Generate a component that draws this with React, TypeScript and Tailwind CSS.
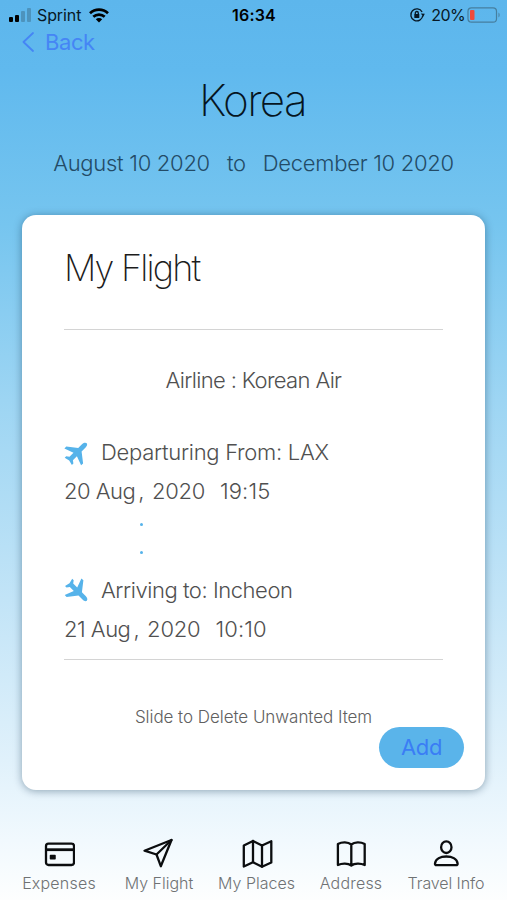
import React from 'react';

const Plane: React.FC<{ className?: string }> = ({ className }) => (
  <svg viewBox="0 0 24 24" className={className} fill="currentColor">
    <path d="M22.700 1.200c-1-1-3-.6-4.500.9L14.200 6.100 2.300 4.600.4 6.600l9.100 4.200-4 4-3.300-.5L.7 15.800l4.500 2.700 2.700 4.500 1.500-1.500-.5-3.300 4-4 4.200 9.100 2-1.900-1.500-11.900 4-4c1.500-1.500 2-3.400 1.100-4.300z" />
  </svg>
);

const stroke = {
  viewBox: '0 0 32 32',
  fill: 'none',
  stroke: '#0b0d0f',
  strokeWidth: 2.3,
  strokeLinecap: 'round' as const,
  strokeLinejoin: 'round' as const,
  className: 'w-8 h-8',
};

const tabs = [
  {
    label: 'Expenses',
    width: 'w-[94px]',
    text: 'tracking-[0.2px]',
    icon: (
      <svg {...stroke}>
        <rect x="3" y="5.700" width="28" height="21.300" rx="2.500" />
        <path d="M3 11.700h28" strokeWidth="2.800" strokeLinecap="butt" />
        <rect x="7.500" y="17.500" width="4.500" height="3.300" fill="#0b0d0f" strokeWidth="1.500" />
      </svg>
    ),
  },
  {
    label: 'My Flight',
    width: 'w-[106px]',
    text: 'tracking-[0px]',
    icon: (
      <svg {...stroke}>
        <path d="M28.500 2 1.500 12.700l12 3.800 4.300 11.700z" />
        <path d="M28.500 2 13.500 16.500" />
      </svg>
    ),
  },
  {
    label: 'My Places',
    width: 'w-[89px]',
    text: 'tracking-[0px]',
    icon: (
      <svg {...stroke}>
        <path d="M2.800 7.500 12 3l9 4.500L30.300 3.300v21.200L21 28.700l-9-4.500-9.200 4.300z" />
        <path d="M12 3v21.200M21 7.500v21.200" />
      </svg>
    ),
  },
  {
    label: 'Address',
    width: 'w-[100px]',
    text: 'tracking-[0.2px]',
    icon: (
      <svg {...stroke}>
        <path d="M16.300 6.500C13 3.800 7 3.800 2.900 6v21c4.100-2 10.100-2 13.400.5 3.300-2.500 9.300-2.500 13.400-.5V6c-4.100-2.200-10.100-2.200-13.400.5zM16.300 6.500v21" />
      </svg>
    ),
  },
  {
    label: 'Travel Info',
    width: 'w-[90px]',
    text: 'tracking-[-0.1px]',
    icon: (
      <svg {...stroke}>
        <ellipse cx="16.300" cy="9.200" rx="5.200" ry="5.800" />
        <path d="M5 25.500c.6-4.700 5.500-7 11.300-7s10.700 2.300 11.300 7c.1 1-.5 1.700-1.400 1.700H6.400c-.9 0-1.500-.7-1.400-1.700z" />
      </svg>
    ),
  },
];

const App: React.FC = () => {
  return (
    <div className="w-full h-[900px] overflow-hidden flex flex-col font-['Inter','Liberation_Sans',sans-serif] bg-[linear-gradient(180deg,#5db6ec_0px,#60b9ee_70px,#76c5ef_225px,#9dd5f3_400px,#c2e4f7_600px,#e0f1fb_760px,#f1f9fe_840px,#fdfefe_900px)]">
      {/* Status bar */}
      <div className="h-[30px] px-[9px] flex items-center justify-between text-[#071825]">
        <div className="flex items-center w-[170px]">
          <div className="flex items-end gap-[2px] h-[14px]">
            <span className="w-1 h-[5px] rounded-[1px] bg-black" />
            <span className="w-1 h-[7px] rounded-[1px] bg-black" />
            <span className="w-1 h-[11px] rounded-[1px] bg-[#4d93bd]" />
            <span className="w-1 h-[14px] rounded-[1px] bg-[#4d93bd]" />
          </div>
          <span className="ml-[6px] text-[16px] leading-[30px] tracking-[-0.1px]">Sprint</span>
          <svg viewBox="0 0 20 15" className="ml-[8px] w-5 h-[15px]" fill="none" stroke="#000" strokeWidth="2.700">
            <path d="M1 5.200a13 13 0 0 1 18 0M4.300 8.800a8.300 8.300 0 0 1 11.400 0" />
            <path d="m10 14.500-3.200-3.200a4.600 4.600 0 0 1 6.400 0z" fill="#000" stroke="none" />
          </svg>
        </div>
        <span className="text-[16px] font-semibold tracking-[0.2px] text-black">16:34</span>
        <div className="flex items-center justify-end w-[170px] -mr-[1px]">
          <svg viewBox="0 0 16 16" className="w-4 h-4 mr-[6px]" fill="none" stroke="#071825" strokeWidth="1.300">
            <path d="M13.800 8.500a6 6 0 1 1-.7-3.500" />
            <path d="m11.800 6.500 4 .2-1.500 3z" fill="#071825" stroke="none" />
            <rect x="5.300" y="7" width="5" height="4" rx=".5" fill="#071825" stroke="none" />
            <path d="M6.300 7.500V6a1.500 1.500 0 0 1 3 0v1.500" />
          </svg>
          <span className="text-[16px] tracking-[-0.6px]">20%</span>
          <svg viewBox="0 0 34 16" className="w-[34px] h-4 ml-[2px] -mr-[2px]">
            <rect x="1" y=".8" width="28.500" height="14.400" rx="3.500" fill="none" stroke="#467f9f" strokeWidth="1.200" />
            <rect x="3" y="3" width="4.500" height="10" rx="1" fill="#ef4b3c" />
            <path d="M31.500 5.500c1.500.8 1.500 4.200 0 5z" fill="#467f9f" />
          </svg>
        </div>
      </div>

      {/* Back link */}
      <div className="h-6 pl-[22px] flex items-center text-[#4585f5]">
        <svg viewBox="0 0 12 20" className="w-3 h-5" fill="none" stroke="currentColor" strokeWidth="1.800" strokeLinecap="round" strokeLinejoin="round">
          <path d="M11 1 1.500 10 11 19" />
        </svg>
        <span className="ml-[11px] text-[22px] leading-6 tracking-[-0.4px]">Back</span>
      </div>

      {/* Trip title */}
      <h1 className="mt-[21px] h-[50px] pr-[2px] text-center text-[44px] leading-[50px] font-extralight tracking-[-1.600px] text-[#06151f]">Korea</h1>
      <div className="mt-[25px] h-[26px] flex justify-center text-[22px] leading-[26px] font-light tracking-[-0.280px] text-[#234b66]">
        <span>August 10 2020</span>
        <span className="ml-[17px]">to</span>
        <span className="ml-[17px]">December 10 2020</span>
      </div>

      {/* Flight card */}
      <div className="mt-[39px] ml-[22px] w-[463px] h-[575px] px-[42px] rounded-[14px] bg-white shadow-[0_1px_8px_rgba(0,40,70,0.4)] flex flex-col text-[#505050] font-light text-[22px]">
        <h2 className="mt-[31px] h-[44px] text-[36px] leading-[44px] font-extralight tracking-[-1.800px] text-[#1c1c1c]">My Flight</h2>
        <div className="mt-[39px] border-t border-[#d4d4d4]" />
        <div className="mt-[36px] h-7 leading-7 text-center tracking-[-0.650px]">Airline : Korean Air</div>

        <div className="mt-[44px] h-7 flex items-center">
          <Plane className="w-6 h-6 mt-[3px] text-[#56b3ea]" />
          <span className="ml-[13px] leading-7 tracking-[-0.280px]">Departuring From: LAX</span>
        </div>
        <div className="mt-[11px] h-7 flex leading-7 tracking-[-0.500px]">
          <span>20 Aug</span>
          <span className="ml-[3px]">,</span>
          <span className="ml-[8px] tracking-[-0.300px]">2020</span>
          <span className="ml-[15px] tracking-[0.100px]">19:15</span>
        </div>

        <div className="ml-[76px] mt-[18px] flex flex-col gap-[25px]">
          <span className="w-[3px] h-[3px] rounded-full bg-[#56b3ea]" />
          <span className="w-[3px] h-[3px] rounded-full bg-[#56b3ea]" />
        </div>

        <div className="mt-[22px] h-7 flex items-center">
          <Plane className="w-6 h-6 rotate-90 text-[#56b3ea]" />
          <span className="ml-[13px] leading-7 tracking-[-0.450px]">Arriving to: Incheon</span>
        </div>
        <div className="mt-[11px] h-7 flex leading-7 tracking-[-0.500px]">
          <span>21 Aug</span>
          <span className="ml-[3px]">,</span>
          <span className="ml-[8px] tracking-[-0.200px]">2020</span>
          <span className="ml-[15px] tracking-[0.100px]">10:10</span>
        </div>
        <div className="mt-[16px] border-t border-[#d4d4d4]" />

        <div className="mt-[47px] h-5 text-center text-[17px] leading-5 tracking-[-0.050px] text-[#606060]">Slide to Delete Unwanted Item</div>
        <button className="-mr-[21px] self-end w-[85px] h-[41px] rounded-full bg-[#5ab4ea] text-[#3a7df5] text-[22px] font-normal tracking-[-0.300px]">Add</button>
      </div>

      {/* Tab bar */}
      <div className="mt-[48px] pl-[12px] flex">
        {tabs.map((tab) => (
          <div key={tab.label} className={`${tab.width} flex flex-col items-center`}>
            {tab.icon}
            <span className={`mt-[3px] text-[16px] leading-5 font-light whitespace-nowrap text-[#6f7274] ${tab.text}`}>{tab.label}</span>
          </div>
        ))}
      </div>
    </div>
  );
};

export default App;
